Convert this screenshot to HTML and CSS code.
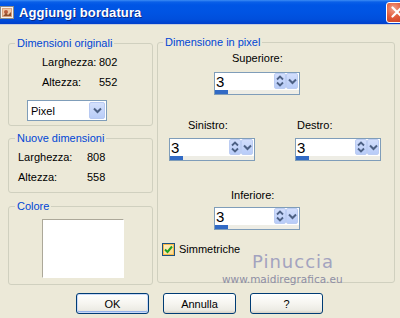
FILE: index.html
```html
<!DOCTYPE html>
<html>
<head>
<meta charset="utf-8">
<link rel="stylesheet" href="styles.css">
</head>
<body>
<div class="titlebar">
  <svg class="app-icon" width="15" height="15" viewBox="0 0 15 15">
    <rect x="0.5" y="1.5" width="13" height="12" fill="#f4f2ee" stroke="#8c8a86"/>
    <rect x="2" y="3" width="10" height="9" fill="#d9a27c"/>
    <rect x="3" y="4" width="8" height="7" fill="#f0c9a6"/>
    <circle cx="6" cy="7" r="2" fill="#b85b3c"/>
    <path d="M3 11 L6 8 L8 10 L11 7 L11 11 Z" fill="#8d4f2d"/>
  </svg>
  <span class="title">Aggiungi bordatura</span>
  <div class="close">
    <svg width="12" height="12" viewBox="0 0 12 12"><path d="M1.5 1.5 L10.5 10.5 M10.5 1.5 L1.5 10.5" stroke="#fff" stroke-width="2.2" stroke-linecap="round"/></svg>
  </div>
</div>

<div class="content">
  <div class="left-col">
    <div class="group g-orig">
      <span class="legend">Dimensioni originali</span>
      <div class="kv kv-orig">
        <span>Larghezza:</span><span>802</span>
        <span>Altezza:</span><span>552</span>
      </div>
      <div class="select">
        <span class="select-val">Pixel</span>
        <span class="select-btn">
          <svg width="9" height="7" viewBox="0 0 9 7"><path d="M1 1.5 L4.5 5 L8 1.5" fill="none" stroke="#4d6185" stroke-width="2"/></svg>
        </span>
      </div>
    </div>
    <div class="group g-new">
      <span class="legend">Nuove dimensioni</span>
      <div class="kv kv-new">
        <span>Larghezza:</span><span>808</span>
        <span>Altezza:</span><span>558</span>
      </div>
    </div>
    <div class="group g-color">
      <span class="legend">Colore</span>
      <div class="swatch"></div>
    </div>
  </div>

  <div class="group g-pixel">
    <span class="legend">Dimensione in pixel</span>
    <div class="block b-top">
      <div class="lbl l-sup">Superiore:</div>
      <div class="spin">
        <div class="spin-top">
          <span class="spin-val">3</span>
          <span class="spin-arrows">
            <svg width="10" height="14" viewBox="0 0 10 14"><path d="M2 5.5 L5 2.5 L8 5.5 M2 8.5 L5 11.5 L8 8.5" fill="none" stroke="#4d6185" stroke-width="1.8"/></svg>
          </span>
          <span class="spin-drop">
            <svg width="9" height="7" viewBox="0 0 9 7"><path d="M1 1.5 L4.5 5 L8 1.5" fill="none" stroke="#4d6185" stroke-width="2"/></svg>
          </span>
        </div>
        <div class="spin-bar"><span class="spin-fill"></span></div>
      </div>
    </div>
    <div class="row-mid">
      <div class="block b-left">
        <div class="lbl l-sin">Sinistro:</div>
        <div class="spin">
          <div class="spin-top">
            <span class="spin-val">3</span>
            <span class="spin-arrows">
              <svg width="10" height="14" viewBox="0 0 10 14"><path d="M2 5.5 L5 2.5 L8 5.5 M2 8.5 L5 11.5 L8 8.5" fill="none" stroke="#4d6185" stroke-width="1.8"/></svg>
            </span>
            <span class="spin-drop">
              <svg width="9" height="7" viewBox="0 0 9 7"><path d="M1 1.5 L4.5 5 L8 1.5" fill="none" stroke="#4d6185" stroke-width="2"/></svg>
            </span>
          </div>
          <div class="spin-bar"><span class="spin-fill"></span></div>
        </div>
      </div>
      <div class="block b-right">
        <div class="lbl l-des">Destro:</div>
        <div class="spin">
          <div class="spin-top">
            <span class="spin-val">3</span>
            <span class="spin-arrows">
              <svg width="10" height="14" viewBox="0 0 10 14"><path d="M2 5.5 L5 2.5 L8 5.5 M2 8.5 L5 11.5 L8 8.5" fill="none" stroke="#4d6185" stroke-width="1.8"/></svg>
            </span>
            <span class="spin-drop">
              <svg width="9" height="7" viewBox="0 0 9 7"><path d="M1 1.5 L4.5 5 L8 1.5" fill="none" stroke="#4d6185" stroke-width="2"/></svg>
            </span>
          </div>
          <div class="spin-bar"><span class="spin-fill"></span></div>
        </div>
      </div>
    </div>
    <div class="block b-bottom">
      <div class="lbl l-inf">Inferiore:</div>
      <div class="spin">
        <div class="spin-top">
          <span class="spin-val">3</span>
          <span class="spin-arrows">
            <svg width="10" height="14" viewBox="0 0 10 14"><path d="M2 5.5 L5 2.5 L8 5.5 M2 8.5 L5 11.5 L8 8.5" fill="none" stroke="#4d6185" stroke-width="1.8"/></svg>
          </span>
          <span class="spin-drop">
            <svg width="9" height="7" viewBox="0 0 9 7"><path d="M1 1.5 L4.5 5 L8 1.5" fill="none" stroke="#4d6185" stroke-width="2"/></svg>
          </span>
        </div>
        <div class="spin-bar"><span class="spin-fill"></span></div>
      </div>
    </div>
    <div class="check-row">
      <span class="checkbox">
        <svg width="9" height="9" viewBox="0 0 9 9"><path d="M1 4.5 L3.5 7 L8 1.5" fill="none" stroke="#21a121" stroke-width="2"/></svg>
      </span>
      <span>Simmetriche</span>
    </div>
  </div>
</div>

<div class="buttons">
  <button class="btn btn-default">OK</button>
  <button class="btn">Annulla</button>
  <button class="btn btn-last">?</button>
</div>

<div class="wm-name">Pinuccia</div>
<div class="wm-url">www.maidiregrafica.eu</div>
</body>
</html>
```
FILE: styles.css
```css
html, body {
  margin: 0;
  padding: 0;
}
body {
  width: 400px;
  height: 318px;
  overflow: hidden;
  position: relative;
  background: #ece9d8;
  font-family: "Liberation Sans", Arial, sans-serif;
  font-size: 11px;
  color: #000;
}

/* Title bar */
.titlebar {
  height: 24px;
  display: flex;
  align-items: center;
  overflow: hidden;
  background: linear-gradient(#3c8cf4 0, #0a5fe8 2px, #0055e5 5px, #0054e3 50%, #004fdc 80%, #003fcb 100%);
  border-bottom: 1px solid #c7cddb;
}
.app-icon {
  margin-left: 0;
  margin-top: 1px;
  flex: none;
}
.title {
  margin-left: 4px;
  color: #fff;
  font-weight: bold;
  font-size: 13px;
  text-shadow: 1px 1px 0 #0a2a8a;
  letter-spacing: 0.1px;
}
.close {
  margin-left: auto;
  margin-right: -7px;
  width: 21px;
  height: 21px;
  box-sizing: border-box;
  border: 1px solid #fff;
  border-radius: 3px;
  background: radial-gradient(circle at 35% 30%, #f0a08a 0, #e35d3c 45%, #c4381a 100%);
  display: flex;
  align-items: center;
  justify-content: center;
  flex: none;
}

/* Main content */
.content {
  display: flex;
  gap: 4px;
  padding: 17px 0 0 8px;
}
.left-col {
  margin-top: 1px;
  width: 145px;
}
.group {
  position: relative;
  border: 1px solid #d0d0bf;
  border-radius: 3px;
  box-sizing: border-box;
}
.legend {
  position: absolute;
  top: -8px;
  left: 6px;
  padding: 0 2px;
  background: #ece9d8;
  color: #0046d5;
  line-height: 14px;
  white-space: nowrap;
}

.g-orig {
  height: 83px;
  padding-top: 8px;
}
.kv {
  display: grid;
  line-height: 20px;
}
.kv-orig {
  margin-left: 33px;
  grid-template-columns: 57px auto;
}
.select {
  margin: 8px 0 0 18px;
  width: 80px;
  height: 21px;
  box-sizing: border-box;
  border: 1px solid #7f9db9;
  background: #fff;
  display: flex;
  align-items: center;
}
.select-val {
  flex: 1;
  padding-left: 3px;
}
.select-btn {
  width: 16px;
  height: 17px;
  margin-right: 1px;
  border-radius: 2px;
  background: linear-gradient(#d4e0fc, #b9cdf8);
  border: 1px solid #b7c9f2;
  box-sizing: border-box;
  display: flex;
  align-items: center;
  justify-content: center;
}

.g-new {
  margin-top: 12px;
  height: 55px;
  padding-top: 8px;
}
.kv-new {
  margin-left: 9px;
  grid-template-columns: 69px auto;
}

.g-color {
  margin-top: 13px;
  height: 79px;
  padding-top: 12px;
}
.swatch {
  margin-left: 33px;
  width: 82px;
  height: 59px;
  box-sizing: border-box;
  background: #fff;
  border-top: 1px solid #aca899;
  border-left: 1px solid #aca899;
  border-right: 1px solid #fff;
  border-bottom: 1px solid #fff;
}

/* Right group */
.g-pixel {
  width: 238px;
  height: 241px;
}
.g-pixel .legend {
  left: 5px;
}
.block {
  display: flex;
  flex-direction: column;
}
.lbl {
  line-height: 13px;
}
.b-top {
  margin: 9px 0 0 56px;
  gap: 7px;
}
.l-sup { padding-left: 18px; }
.row-mid {
  display: flex;
  gap: 40px;
  margin: 24px 0 0 11px;
}
.b-left, .b-right {
  gap: 6px;
}
.l-sin { padding-left: 19px; }
.l-des { padding-left: 2px; }
.b-bottom {
  margin: 28px 0 0 56px;
  gap: 5px;
}
.l-inf { padding-left: 17px; }

.spin {
  width: 86px;
  height: 23px;
  box-sizing: border-box;
  border: 1px solid #7f9db9;
  background: #fff;
  display: flex;
  flex-direction: column;
}
.spin-top {
  height: 17px;
  display: flex;
}
.spin-val {
  flex: 1;
  padding-left: 1px;
  font-size: 15px;
  line-height: 17px;
}
.spin-arrows, .spin-drop {
  width: 12px;
  height: 16px;
  margin-top: 0;
  box-sizing: border-box;
  background: linear-gradient(#d2defc, #b8ccf8);
  border: 1px solid #bccdf3;
  border-radius: 2px;
  display: flex;
  align-items: center;
  justify-content: center;
}
.spin-drop {
  margin-right: 1px;
}
.spin-bar {
  height: 4px;
  background: #eeede5;
  display: flex;
}
.spin-fill {
  width: 13px;
  background: #316ac5;
}

.check-row {
  display: flex;
  align-items: center;
  gap: 4px;
  margin: 13px 0 0 4px;
  line-height: 13px;
}
.checkbox {
  width: 13px;
  height: 13px;
  box-sizing: border-box;
  border: 1px solid #1c5180;
  background: linear-gradient(135deg, #fff3c6, #fbd88a);
  box-shadow: inset 0 0 0 1px #f9b949;
  display: flex;
  align-items: center;
  justify-content: center;
}

/* Buttons */
.buttons {
  display: flex;
  margin: 8px 0 0 76px;
}
.btn {
  width: 73px;
  height: 21px;
  margin: 0 14px 0 0;
  padding: 0;
  box-sizing: border-box;
  border: 1px solid #003c74;
  border-radius: 3px;
  background: linear-gradient(#ffffff 0, #f6f5f0 50%, #ecebe4 85%, #d6d0c5 100%);
  font-family: "Liberation Sans", Arial, sans-serif;
  font-size: 11px;
  color: #000;
}
.btn-default {
  box-shadow: inset 0 0 0 1px #c9d9f8, inset 0 -1px 0 1px #94b2ea;
  margin-right: 14px;
}

/* Watermark */
.wm-name {
  position: absolute;
  left: 252px;
  top: 251px;
  font-family: "DejaVu Sans", sans-serif;
  font-size: 18px;
  letter-spacing: 1px;
  color: #a3a3bf;
}
.wm-url {
  position: absolute;
  left: 222px;
  top: 273px;
  font-family: "DejaVu Sans", sans-serif;
  font-size: 10.5px;
  color: #8e8ea4;
}
```
